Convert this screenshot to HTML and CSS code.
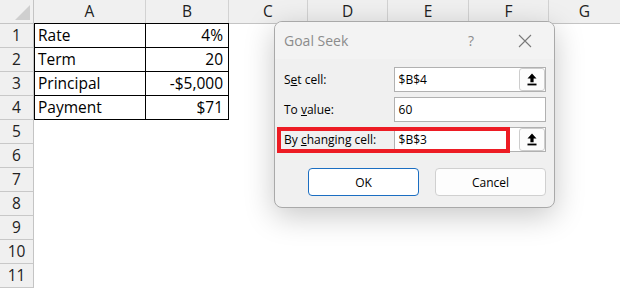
FILE: index.html
```html
<!DOCTYPE html>
<html lang="en">
<head>
    <meta charset="UTF-8">
    <meta name="viewport" content="width=device-width, initial-scale=1.0">
    <title>Goal Seek</title>
    <link rel="stylesheet" href="styles.css">
</head>
<body>
    <div class="sheet">
        <div class="colHeads">
            <div class="corner"><span class="tri"></span></div>
            <div class="colHead wA">A</div>
            <div class="colHead wB">B</div>
            <div class="colHead wC">C</div>
            <div class="colHead wD">D</div>
            <div class="colHead wE">E</div>
            <div class="colHead wF">F</div>
            <div class="colHead wG">G</div>
        </div>

        <div class="row">
            <div class="rowHead">1</div>
            <div class="cell wA boxed first">Rate</div>
            <div class="cell wB boxed first num">4%</div>
        </div>
        <div class="row">
            <div class="rowHead">2</div>
            <div class="cell wA boxed">Term</div>
            <div class="cell wB boxed num">20</div>
        </div>
        <div class="row">
            <div class="rowHead">3</div>
            <div class="cell wA boxed">Principal</div>
            <div class="cell wB boxed num">-$5,000</div>
        </div>
        <div class="row">
            <div class="rowHead">4</div>
            <div class="cell wA boxed">Payment</div>
            <div class="cell wB boxed num">$71</div>
        </div>
        <div class="row"><div class="rowHead">5</div></div>
        <div class="row"><div class="rowHead">6</div></div>
        <div class="row"><div class="rowHead">7</div></div>
        <div class="row"><div class="rowHead">8</div></div>
        <div class="row"><div class="rowHead">9</div></div>
        <div class="row"><div class="rowHead">10</div></div>
        <div class="row"><div class="rowHead">11</div></div>
    </div>

    <div class="dialog">
        <div class="titleBar">
            <span class="title">Goal Seek</span>
            <span class="help">?</span>
            <svg class="close" width="14" height="14" viewBox="0 0 14 14">
                <path d="M1 1 L13 13 M13 1 L1 13" stroke="#7a7a7a" stroke-width="1.1" fill="none"/>
            </svg>
        </div>
        <div class="dialogBody">
            <div class="field">
                <label>S<u>e</u>t cell:</label>
                <div class="inputBox">
                    <span class="value">$B$4</span>
                    <button class="refBtn">
                        <svg width="10" height="13" viewBox="0 0 10 13">
                            <path d="M5 0.5 L9.5 5.5 L6.6 5.5 L6.6 9.2 L3.4 9.2 L3.4 5.5 L0.5 5.5 Z" fill="#000"/>
                            <rect x="0.5" y="10.6" width="9" height="1.8" fill="#000"/>
                        </svg>
                    </button>
                </div>
            </div>
            <div class="field">
                <label>To <u>v</u>alue:</label>
                <div class="inputBox">
                    <span class="value">60</span>
                </div>
            </div>
            <div class="field marked">
                <label>By <u>c</u>hanging cell:</label>
                <div class="inputBox">
                    <span class="value">$B$3</span>
                    <button class="refBtn">
                        <svg width="10" height="13" viewBox="0 0 10 13">
                            <path d="M5 0.5 L9.5 5.5 L6.6 5.5 L6.6 9.2 L3.4 9.2 L3.4 5.5 L0.5 5.5 Z" fill="#000"/>
                            <rect x="0.5" y="10.6" width="9" height="1.8" fill="#000"/>
                        </svg>
                    </button>
                </div>
                <div class="redBox"></div>
            </div>
            <div class="buttons">
                <button class="dlgBtn default">OK</button>
                <button class="dlgBtn">Cancel</button>
            </div>
        </div>
    </div>
</body>
</html>
```

FILE: styles.css
```css
* {
    box-sizing: border-box;
}

body {
    margin: 0;
    background: #fff;
    font-family: 'Open Sans', 'Noto Sans', sans-serif;
    color: #000;
    overflow: hidden;
}

.sheet {
    width: 620px;
    height: 288px;
}

.colHeads {
    display: flex;
    height: 24px;
    background: #f0f0f0;
    border-bottom: 1px solid #c4c4c4;
}

.corner {
    position: relative;
    width: 34px;
    border-right: 1px solid #c4c4c4;
}

.tri {
    position: absolute;
    right: 3px;
    bottom: 3px;
    width: 0;
    height: 0;
    border-left: 15px solid transparent;
    border-bottom: 15px solid #cfcfcf;
}

.colHead {
    border-right: 1px solid #d2d2d2;
    text-align: center;
    font-size: 15.5px;
    line-height: 23px;
    color: #222;
}

.wA { width: 112px; }
.wB { width: 83px; }
.wC { width: 79px; }
.wD { width: 80px; }
.wE { width: 81px; }
.wF { width: 80px; }
.wG { flex: 1; border-right: none; }

.row {
    display: flex;
    height: 24px;
}

.rowHead {
    width: 34px;
    background: #f0f0f0;
    border-right: 1px solid #c4c4c4;
    border-bottom: 1px solid #c8c8c8;
    text-align: center;
    font-size: 15.5px;
    line-height: 23px;
    color: #222;
}

.cell {
    font-size: 15.5px;
    line-height: 23px;
    padding: 0 3px;
    white-space: nowrap;
}

.boxed {
    border-right: 1px solid #000;
    border-bottom: 1px solid #000;
}

.boxed.wA {
    border-left: 1px solid #000;
}

.boxed.first {
    margin-top: -1px;
    height: 25px;
    border-top: 1px solid #000;
    line-height: 23px;
}

.num {
    text-align: right;
    padding-right: 5px;
}

/* Goal Seek dialog floats over the sheet */
.dialog {
    position: absolute;
    left: 274px;
    top: 21px;
    width: 281px;
    height: 187px;
    background: #f0f0f0;
    border: 1px solid #a9a9a9;
    border-radius: 8px;
    box-shadow: 0 8px 30px rgba(0, 0, 0, 0.22);
    overflow: hidden;
}

.titleBar {
    display: flex;
    align-items: center;
    height: 37px;
    padding: 0 0 0 9px;
    background: #f3f3f3;
}

.title {
    flex: 1;
    font-size: 14px;
    color: #8c8c8c;
}

.help {
    font-size: 14px;
    color: #8c8c8c;
    margin-right: 44px;
}

.close {
    margin-right: 22px;
}

.dialogBody {
    display: flex;
    flex-direction: column;
    gap: 5px;
    padding: 8px 8px 0 9px;
}

.field {
    position: relative;
    display: flex;
    align-items: center;
    height: 25px;
}

.field label {
    width: 110px;
    font-size: 12px;
    color: #000;
}

.inputBox {
    display: flex;
    align-items: center;
    width: 153px;
    height: 25px;
    background: #fff;
    border: 1px solid #b1b1b1;
}

.value {
    flex: 1;
    font-size: 12px;
    padding-left: 4px;
}

.refBtn {
    display: flex;
    align-items: center;
    justify-content: center;
    width: 26px;
    height: 23px;
    padding: 0;
    background: #fcfcfc;
    border: 1px solid #cdcdcd;
    border-radius: 3px;
}

.redBox {
    position: absolute;
    left: -7px;
    top: 0;
    width: 233px;
    height: 26px;
    border: 4px solid #ed1c24;
}

.buttons {
    display: flex;
    justify-content: flex-end;
    gap: 16px;
    margin-top: 11px;
}

.dlgBtn {
    width: 111px;
    height: 28px;
    font-family: 'Open Sans', 'Noto Sans', sans-serif;
    font-size: 12px;
    color: #000;
    background: #fdfdfd;
    border: 1px solid #d0d0d0;
    border-radius: 4px;
}

.dlgBtn.default {
    background: #fff;
    border-color: #1b6ec2;
}
```
